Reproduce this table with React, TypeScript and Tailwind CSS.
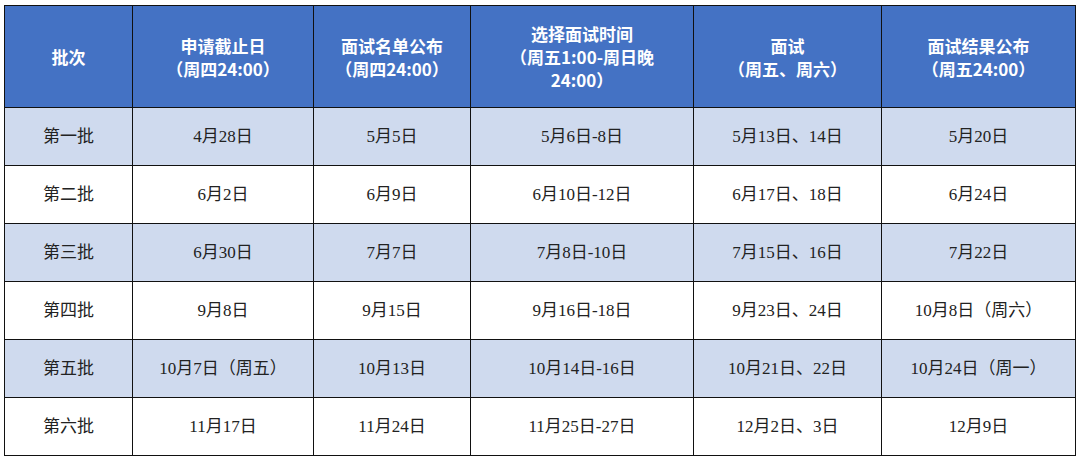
import React from 'react';

const headers = [
  ['批次'],
  ['申请截止日', '（周四24:00）'],
  ['面试名单公布', '（周四24:00）'],
  ['选择面试时间', '（周五1:00-周日晚', '24:00）'],
  ['面试', '（周五、周六）'],
  ['面试结果公布', '（周五24:00）'],
];

const rows = [
  ['第一批', '4月28日', '5月5日', '5月6日-8日', '5月13日、14日', '5月20日'],
  ['第二批', '6月2日', '6月9日', '6月10日-12日', '6月17日、18日', '6月24日'],
  ['第三批', '6月30日', '7月7日', '7月8日-10日', '7月15日、16日', '7月22日'],
  ['第四批', '9月8日', '9月15日', '9月16日-18日', '9月23日、24日', '10月8日（周六）'],
  ['第五批', '10月7日（周五）', '10月13日', '10月14日-16日', '10月21日、22日', '10月24日（周一）'],
  ['第六批', '11月17日', '11月24日', '11月25日-27日', '12月2日、3日', '12月9日'],
];

const widths = [128, 181, 157, 223, 188, 194];

export default function App() {
  return (
    <div className="w-[1080px] h-[457px] bg-white pt-[5px] pl-[4px] overflow-hidden">
      <table className="table-fixed border-collapse w-[1071px]">
        <colgroup>
          {widths.map((w, i) => (
            <col key={i} style={{ width: w }} />
          ))}
        </colgroup>
        <thead>
          <tr className="h-[102px] bg-[#4472c4]">
            {headers.map((lines, i) => (
              <th
                key={i}
                className="border-[1.5px] border-[#111] text-white font-bold text-[17px] leading-[23px] text-center align-middle [font-family:'Noto_Sans_CJK_SC',sans-serif]"
              >
                {lines.map((l, j) => (
                  <div key={j}>{l}</div>
                ))}
              </th>
            ))}
          </tr>
        </thead>
        <tbody>
          {rows.map((r, i) => (
            <tr key={i} className={`h-[58px] ${i % 2 === 0 ? 'bg-[#cfdaee]' : 'bg-white'}`}>
              {r.map((c, j) => (
                <td
                  key={j}
                  className="border-[1.5px] border-[#111] text-[#222] text-[17px] text-center align-middle [font-family:'Liberation_Serif','Noto_Sans_CJK_SC',serif]"
                >
                  {c}
                </td>
              ))}
            </tr>
          ))}
        </tbody>
      </table>
    </div>
  );
}
